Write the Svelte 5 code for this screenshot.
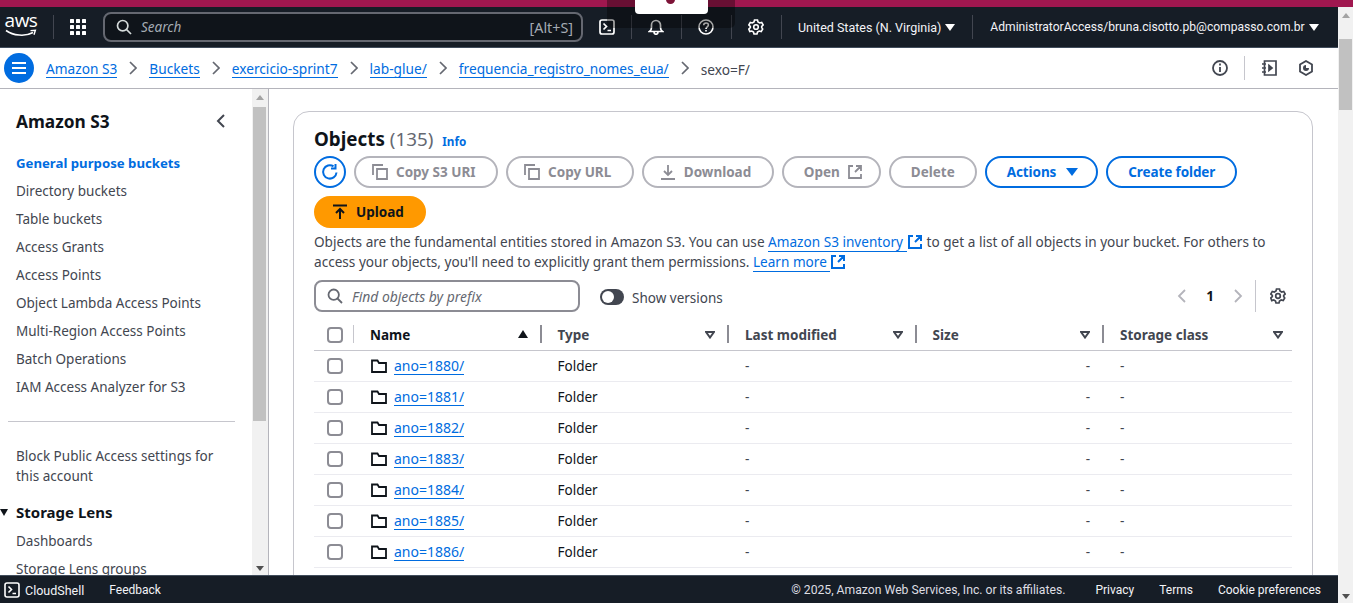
<script lang="ts">
const crumbs = ["Amazon S3", "Buckets", "exercicio-sprint7", "lab-glue/", "frequencia_registro_nomes_eua/"];
const navTop = [
  "Directory buckets",
  "Table buckets",
  "Access Grants",
  "Access Points",
  "Object Lambda Access Points",
  "Multi-Region Access Points",
  "Batch Operations",
  "IAM Access Analyzer for S3",
];
const columns = ["Type", "Last modified", "Size", "Storage class"];
const rows = [1880, 1881, 1882, 1883, 1884, 1885, 1886];
</script>

<div class="strip"></div>
<div class="overlay"><div class="popup"><span class="popup-dot"></span></div></div>

<div class="page">
  <div class="shell">
    <header class="topnav">
      <div class="logo">
        <span class="logo-text">aws</span>
        <svg class="smile" width="32" height="9" viewBox="0 0 32 9">
          <path d="M1 1.500C8 6.500 20 8 28 3.500" fill="none" stroke="#fff" stroke-width="1.600" />
          <path d="M25.500 1.600 30.400 1.200 29 5.800" fill="none" stroke="#fff" stroke-width="1.400" />
        </svg>
      </div>
      <span class="nav-sep sep-logo"></span>
      <svg class="apps" width="16" height="16" viewBox="0 0 16 16" fill="#fff">
        {#each [0, 6, 12] as y}
          {#each [0, 6, 12] as x}
            <rect x={x} y={y} width="4" height="4" rx="0.6" />
          {/each}
        {/each}
      </svg>
      <div class="search">
        <svg width="16" height="16" viewBox="0 0 16 16" fill="none" stroke="#d5dbdb" stroke-width="1.700">
          <circle cx="6.700" cy="6.700" r="5.200" />
          <path d="M10.500 10.500 15 15" />
        </svg>
        <span class="search-text">Search</span>
        <span class="search-key">[Alt+S]</span>
      </div>
      <button class="nav-icon first" aria-label="CloudShell">
        <svg width="16" height="16" viewBox="0 0 16 16" fill="none" stroke="#fff" stroke-width="1.700">
          <rect x="1" y="1" width="14" height="14" rx="2" />
          <path d="M4.500 4.500 7.500 7.500 4.500 10.500M8.500 11.500H12" />
        </svg>
      </button>
      <span class="nav-sep"></span>
      <button class="nav-icon" aria-label="Notifications">
        <svg width="16" height="16" viewBox="0 0 16 16" fill="none" stroke="#fff" stroke-width="1.700">
          <path d="M1.500 12.500c1.500-1 2-2 2-4V6a4.500 4.500 0 0 1 9 0v2.500c0 2 .5 3 2 4ZM6 13c0 3 4 3 4 0" />
        </svg>
      </button>
      <span class="nav-sep"></span>
      <button class="nav-icon" aria-label="Help">
        <svg width="16" height="16" viewBox="0 0 16 16" fill="none" stroke="#fff" stroke-width="1.600">
          <circle cx="8" cy="8" r="7" />
          <path d="M5.700 6.200c0-3 4.700-3 4.700-.1 0 1.900-2.400 1.900-2.400 3.900M8 11v1.500" />
        </svg>
      </button>
      <span class="nav-sep"></span>
      <button class="nav-icon" aria-label="Settings">
        <svg width="16" height="16" viewBox="0 0 16 16" fill="none" stroke="#fff" stroke-width="1.600">
          <circle cx="8" cy="8" r="2.300" />
          <path d="M6.500 1h3l.5 2 1.700 1 2-.6 1.500 2.600-1.500 1.400v1.200L14.700 10l-1.500 2.600-2-.6-1.700 1-.5 2h-3l-.5-2-1.700-1-2 .6L.8 10l1.500-1.400V7.400L.8 6l1.500-2.600 2 .6L6 3Z" />
        </svg>
      </button>
      <span class="nav-sep sep-region"></span>
      <span class="nav-text region">United States (N. Virginia)</span>
      <span class="caret"></span>
      <span class="nav-sep sep-account"></span>
      <span class="nav-text account">AdministratorAccess/bruna.cisotto.pb@compasso.com.br</span>
      <span class="caret"></span>
    </header>

    <div class="crumbbar">
      <button class="menu" aria-label="Open navigation">
        <svg width="16" height="14" viewBox="0 0 16 14" stroke="#fff" stroke-width="2"><path d="M1 2h14M1 7h14M1 12h14" /></svg>
      </button>
      {#each crumbs as crumb}
        <a href="#top" class="crumb">{crumb}</a>
        <svg class="chev" width="8" height="14" viewBox="0 0 8 14" fill="none" stroke="#656871" stroke-width="1.700"><path d="M1 1l6 6-6 6" /></svg>
      {/each}
      <span class="crumb-last">sexo=F/</span>
      <div class="crumb-tools">
        <svg width="16" height="16" viewBox="0 0 16 16" fill="none" stroke="#424650" stroke-width="1.800">
          <circle cx="8" cy="8" r="7" />
          <path d="M8 7v5M8 3.500v2" />
        </svg>
        <span class="tool-sep"></span>
        <svg width="16" height="16" viewBox="0 0 16 16" fill="none" stroke="#424650" stroke-width="1.700">
          <path d="M3.500 1H15v14H3.500ZM1 4h4M1 8h4M1 12h4" />
          <path d="M8 5.500 11 8l-3 2.500Z" fill="#424650" />
        </svg>
        <svg class="tool-hex" width="16" height="16" viewBox="0 0 16 16" fill="none" stroke="#424650" stroke-width="1.800">
          <path d="M8 1l6 3.500v7L8 15l-6-3.500v-7Z" />
          <path d="M8 5a3 3 0 1 0 3 3H8Z" fill="#424650" stroke="none" />
        </svg>
      </div>
    </div>

    <div class="body">
      <aside class="side">
        <div class="side-inner">
          <div class="side-head">
            <h2>Amazon S3</h2>
            <svg width="9" height="14" viewBox="0 0 9 14" fill="none" stroke="#424650" stroke-width="2"><path d="M8 1 2 7l6 6" /></svg>
          </div>
          <a href="#top" class="side-link active">General purpose buckets</a>
          {#each navTop as item}
            <a href="#top" class="side-link">{item}</a>
          {/each}
          <hr />
          <a href="#top" class="side-link multi">Block Public Access settings for this account</a>
          <div class="side-group"><span class="group-caret"></span>Storage Lens</div>
          <a href="#top" class="side-link">Dashboards</a>
          <a href="#top" class="side-link">Storage Lens groups</a>
        </div>
        <div class="side-scroll">
          <span class="arrow-up"></span>
          <span class="side-thumb"></span>
          <span class="spacer"></span>
          <span class="arrow-down"></span>
        </div>
      </aside>

      <main class="content">
        <section class="card">
          <div class="title-row">
            <h1>Objects</h1>
            <span class="count">(135)</span>
            <a href="#top" class="info">Info</a>
          </div>

          <div class="actions">
            <button class="round" aria-label="Refresh">
              <svg width="18" height="18" viewBox="0 0 18 18" fill="none" stroke="#006ce0" stroke-width="2">
                <path d="M15.500 9.500A6.700 6.700 0 1 1 12.500 3.300" />
                <path d="M12.500 1v4.500H8" transform="translate(2 0)" />
              </svg>
            </button>
            <button class="btn off icon-left">
              <svg width="16" height="16" viewBox="0 0 16 16" fill="none" stroke="#8c8c94" stroke-width="1.800"><path d="M11 1H1v10M5 5h10v10H5Z" /></svg>
              Copy S3 URI
            </button>
            <button class="btn off icon-left">
              <svg width="16" height="16" viewBox="0 0 16 16" fill="none" stroke="#8c8c94" stroke-width="1.800"><path d="M11 1H1v10M5 5h10v10H5Z" /></svg>
              Copy URL
            </button>
            <button class="btn off icon-left">
              <svg width="16" height="16" viewBox="0 0 16 16" fill="none" stroke="#8c8c94" stroke-width="1.800"><path d="M8 1v9M4 7l4 4 4-4M1 15h14" /></svg>
              Download
            </button>
            <button class="btn off icon-right">
              Open
              <svg width="14" height="14" viewBox="0 0 14 14" fill="none" stroke="#8c8c94" stroke-width="1.800"><path d="M5 1H1v12h12V9M8 1h5v5M13 1 7 7" /></svg>
            </button>
            <button class="btn off">Delete</button>
            <button class="btn primary icon-caret">
              Actions
              <span class="caret-blue"></span>
            </button>
            <button class="btn primary">Create folder</button>
            <button class="btn upload">
              <svg width="16" height="16" viewBox="0 0 16 16" fill="none" stroke="#0f141a" stroke-width="2"><path d="M1 1.500h14M8 15V5M4 9l4-4 4 4" /></svg>
              Upload
            </button>
          </div>

          <p class="desc">
            Objects are the fundamental entities stored in Amazon S3. You can use
            <a href="#top" class="ext-link"><span>Amazon S3 inventory&nbsp;</span><svg class="ext" width="14" height="14" viewBox="0 0 14 14" fill="none" stroke="#006ce0" stroke-width="2"><path d="M5 1H1v12h12V9M8 1h5v5M13 1 7 7" /></svg></a>
            to get a list of all objects in your bucket. For others to<br />
            access your objects, you'll need to explicitly grant them permissions.
            <a href="#top" class="ext-link"><span>Learn more&nbsp;</span><svg class="ext" width="14" height="14" viewBox="0 0 14 14" fill="none" stroke="#006ce0" stroke-width="2"><path d="M5 1H1v12h12V9M8 1h5v5M13 1 7 7" /></svg></a>
          </p>

          <div class="filter-row">
            <div class="filter">
              <svg width="16" height="16" viewBox="0 0 16 16" fill="none" stroke="#656871" stroke-width="1.800">
                <circle cx="6.700" cy="6.700" r="5.200" />
                <path d="M10.500 10.500 15 15" />
              </svg>
              <span>Find objects by prefix</span>
            </div>
            <span class="toggle"><span class="knob"></span></span>
            <span class="toggle-label">Show versions</span>
            <div class="pager">
              <svg width="10" height="14" viewBox="0 0 10 14" fill="none" stroke="#b4b4bb" stroke-width="1.800"><path d="M8 1 2 7l6 6" /></svg>
              <span class="page-num">1</span>
              <svg width="10" height="14" viewBox="0 0 10 14" fill="none" stroke="#b4b4bb" stroke-width="1.800"><path d="M2 1l6 6-6 6" /></svg>
              <span class="pager-sep"></span>
              <svg width="16" height="16" viewBox="0 0 16 16" fill="none" stroke="#424650" stroke-width="1.700">
                <circle cx="8" cy="8" r="2.300" />
                <path d="M6.500 1h3l.5 2 1.700 1 2-.6 1.500 2.600-1.500 1.400v1.200L14.700 10l-1.500 2.600-2-.6-1.700 1-.5 2h-3l-.5-2-1.700-1-2 .6L.8 10l1.500-1.400V7.400L.8 6l1.500-2.600 2 .6L6 3Z" />
              </svg>
            </div>
          </div>

          <div class="table">
            <div class="row head">
              <div class="cell check"><span class="box"></span><span class="col-sep light"></span></div>
              <div class="cell">
                <span>Name</span>
                <span class="sort-up"></span>
                <span class="col-sep"></span>
              </div>
              {#each columns as col, i}
                <div class="cell" class:dim={i === 3}>
                  <span>{col}</span>
                  <svg class="sort" width="10" height="8" viewBox="0 0 10 8" fill="none" stroke="#424650" stroke-width="2"><path d="M1 1h8L5 6.500Z" /></svg>
                  {#if i < 3}<span class="col-sep"></span>{/if}
                </div>
              {/each}
            </div>
            {#each rows as year}
              <div class="row">
                <div class="cell check"><span class="box"></span></div>
                <div class="cell">
                  <svg class="folder" width="16" height="16" viewBox="0 0 16 16" fill="none" stroke="#0f141a" stroke-width="1.800"><path d="M1 14V2.500h5.500L8 5h7v9Z" /></svg>
                  <a href="#top">ano={year}/</a>
                </div>
                <div class="cell">Folder</div>
                <div class="cell">-</div>
                <div class="cell size">-</div>
                <div class="cell">-</div>
              </div>
            {/each}
          </div>
        </section>
      </main>
    </div>

    <footer class="foot">
      <svg width="16" height="16" viewBox="0 0 16 16" fill="none" stroke="#fff" stroke-width="1.600">
        <rect x="1" y="1" width="14" height="14" rx="2" />
        <path d="M4.500 4.500 7.500 7.500 4.500 10.500M8.500 11.500H12" />
      </svg>
      <span class="foot-shell">CloudShell</span>
      <span class="foot-feedback">Feedback</span>
      <span class="foot-copy">© 2025, Amazon Web Services, Inc. or its affiliates.</span>
      <span class="foot-link">Privacy</span>
      <span class="foot-link">Terms</span>
      <span class="foot-link">Cookie preferences</span>
    </footer>
  </div>

  <div class="page-scroll">
    <span class="arrow-up"></span>
    <span class="page-thumb"></span>
    <span class="spacer"></span>
    <span class="arrow-down"></span>
  </div>
</div>

<style>
  :global(body) {
    margin: 0;
    height: 603px;
    overflow: hidden;
    background: #fff;
    font-family: "Noto Sans", "Open Sans", sans-serif;
    font-size: 14px;
    color: #424650;
  }

  a {
    color: #006ce0;
    text-decoration: none;
    border-bottom: 1px solid #006ce0;
  }

  button {
    font-family: inherit;
    border: 0;
    background: none;
    padding: 0;
  }

  .strip {
    height: 7px;
    background: #a0174f;
  }

  .overlay {
    position: absolute;
    left: 607px;
    top: 0;
    width: 128px;
    height: 28px;
    background: rgba(0, 0, 0, 0.35);
    border-radius: 0 0 5px 5px;
    z-index: 5;
  }

  .popup {
    position: absolute;
    left: 28px;
    top: 0;
    width: 73px;
    height: 14px;
    background: #fff;
    border-radius: 0 0 4px 4px;
  }

  .popup-dot {
    position: absolute;
    left: 31px;
    top: -5px;
    width: 9px;
    height: 9px;
    border-radius: 50%;
    background: #7d1338;
  }

  .page {
    display: flex;
    height: 596px;
  }

  .shell {
    flex: 1;
    min-width: 0;
    display: flex;
    flex-direction: column;
  }

  .topnav {
    height: 40px;
    flex: none;
    background: #161d26;
    border-bottom: 1px solid #414d5c;
    display: flex;
    align-items: center;
    padding-left: 5px;
    color: #fff;
  }

  .logo {
    width: 32px;
    height: 32px;
    display: flex;
    flex-direction: column;
    align-items: center;
    flex: none;
  }

  .logo-text {
    font-size: 19px;
    line-height: 19px;
    font-family: "Open Sans", sans-serif;
    font-weight: 500;
    letter-spacing: -0.5px;
  }

  .smile {
    margin-top: -1px;
  }

  .nav-sep {
    width: 1px;
    height: 24px;
    background: #424650;
    flex: none;
  }

  .sep-logo {
    margin-left: 16px;
    height: 24px;
  }

  .apps {
    margin-left: 16px;
    flex: none;
  }

  .search {
    margin-left: 17px;
    width: 480px;
    height: 30px;
    box-sizing: border-box;
    border: 2px solid #656871;
    border-radius: 8px;
    background: #0f141a;
    display: flex;
    align-items: center;
    padding: 0 8px 0 11px;
    flex: none;
  }

  .search-text {
    margin-left: 9px;
    font-style: italic;
    color: #a4abb3;
    font-size: 13.500px;
  }

  .search-key {
    margin-left: auto;
    color: #a4abb3;
    font-size: 14.300px;
  }

  .nav-icon {
    width: 16px;
    height: 16px;
    margin: 0 16.500px;
    display: block;
    flex: none;
  }

  .nav-icon svg {
    display: block;
  }

  .nav-icon.first {
    margin-left: 16px;
    margin-right: 15.500px;
  }

  .nav-text {
    font-family: Roboto, sans-serif;
    font-size: 12.500px;
    white-space: nowrap;
    color: #f3f3f7;
  }

  .account {
    font-size: 12.100px;
  }

  .sep-region {
    margin-right: 16.500px;
    margin-left: 0;
  }

  .caret {
    margin-left: 4px;
    width: 0;
    height: 0;
    border: 5px solid transparent;
    border-top: 7px solid #fff;
    border-bottom: 0;
    flex: none;
  }

  .sep-account {
    margin: 0 17px 0 17px;
  }

  .crumbbar {
    height: 41px;
    flex: none;
    box-sizing: border-box;
    border-bottom: 1px solid #b4b4bb;
    display: flex;
    align-items: center;
    padding: 0 24px 0 4px;
  }

  .menu {
    width: 30px;
    height: 30px;
    border-radius: 50%;
    background: #006ce0;
    display: flex;
    align-items: center;
    justify-content: center;
    margin-right: 12px;
    flex: none;
  }

  .crumb {
    font-size: 13.700px;
    line-height: 17px;
    white-space: nowrap;
    position: relative;
    top: 1px;
  }

  .chev {
    margin: 0 12px;
    flex: none;
  }

  .crumb-last {
    font-size: 13.700px;
    color: #424650;
    position: relative;
    top: 1px;
  }

  .crumb-tools {
    margin-left: auto;
    display: flex;
    align-items: center;
    gap: 16px;
  }

  .tool-sep {
    width: 1px;
    height: 24px;
    background: #c6c6cd;
  }

  .tool-hex {
    margin-left: 5px;
  }

  .body {
    flex: 1;
    min-height: 0;
    display: flex;
    overflow: hidden;
  }

  .side {
    width: 269px;
    flex: none;
    display: flex;
    box-sizing: border-box;
    border-right: 1px solid #b4b4bb;
  }

  .side-inner {
    width: 252px;
    flex: none;
    overflow: hidden;
    box-sizing: border-box;
    padding: 21px 16px 0;
    display: flex;
    flex-direction: column;
    align-items: flex-start;
  }

  .side-head {
    width: 100%;
    display: flex;
    justify-content: space-between;
    align-items: center;
    padding-right: 11px;
    box-sizing: border-box;
    height: 22px;
    margin-bottom: 21px;
  }

  .side-head h2 {
    margin: 0;
    font-size: 17.300px;
    font-weight: 700;
    color: #0f141a;
  }

  .side-link {
    color: #424650;
    border: 0;
    font-size: 13.500px;
    line-height: 20px;
    margin-bottom: 8px;
    white-space: nowrap;
  }

  .side-link.active {
    color: #006ce0;
    font-weight: 700;
    font-size: 13.200px;
  }

  .side-link.multi {
    white-space: normal;
    margin-bottom: 16px;
  }

  hr {
    width: 227px;
    margin: 16px 0 24px -8px;
    border: 0;
    border-top: 1px solid #c6c6cd;
    flex: none;
  }

  .side-group {
    font-size: 15px;
    font-weight: 700;
    color: #0f141a;
    line-height: 20px;
    margin-bottom: 9px;
    position: relative;
  }

  .group-caret {
    position: absolute;
    left: -16px;
    top: 7px;
    width: 0;
    height: 0;
    border: 4px solid transparent;
    border-top: 7px solid #0f141a;
    border-bottom: 0;
  }

  .side-scroll,
  .page-scroll {
    background: #f1f1f1;
    display: flex;
    flex-direction: column;
    align-items: center;
  }

  .side-scroll {
    width: 16px;
    flex: none;
    box-sizing: border-box;
    padding-right: 1px;
  }

  .page-scroll {
    width: 15px;
    flex: none;
  }

  .arrow-up,
  .arrow-down {
    width: 0;
    height: 0;
    flex: none;
    border: 4px solid transparent;
  }

  .arrow-up {
    border-top: 0;
    border-bottom: 5px solid #a3a3a3;
    margin: 6px 0 7px;
  }

  .arrow-down {
    border-bottom: 0;
    border-top: 5px solid #505050;
    margin: 6px 0 4px;
  }

  .side-thumb {
    width: 13px;
    height: 314px;
    background: #c1c1c1;
    flex: none;
  }

  .page-thumb {
    width: 13px;
    height: 71px;
    background: #c1c1c1;
    flex: none;
    margin-top: 14px;
  }

  .spacer {
    flex: 1;
  }

  .content {
    flex: 1;
    min-width: 0;
    padding: 22px 25px 0 24px;
    overflow: hidden;
  }

  .card {
    box-sizing: border-box;
    border: 1px solid #c6c6cd;
    border-radius: 16px;
    padding: 14px 20px 20px;
    height: 600px;
  }

  .title-row {
    display: flex;
    align-items: baseline;
    height: 27px;
  }

  h1 {
    margin: 0;
    font-size: 18.800px;
    font-weight: 700;
    color: #0f141a;
  }

  .count {
    margin-left: 5px;
    font-size: 18.800px;
    color: #656871;
  }

  .info {
    margin-left: 9px;
    font-size: 11.700px;
    font-weight: 700;
    border: 0;
  }

  .actions {
    margin-top: 3px;
    display: flex;
    flex-wrap: wrap;
    gap: 8px;
  }

  .round {
    width: 32px;
    height: 32px;
    box-sizing: border-box;
    border: 2px solid #006ce0;
    border-radius: 50%;
    display: flex;
    align-items: center;
    justify-content: center;
  }

  .btn {
    height: 32px;
    box-sizing: border-box;
    border-radius: 16px;
    border: 2px solid #b4b4bb;
    padding: 0 20px;
    display: flex;
    align-items: center;
    gap: 8px;
    font-size: 13.500px;
    font-weight: 700;
    white-space: nowrap;
  }

  .off {
    color: #8c8c94;
  }

  .icon-left {
    padding-left: 16px;
    padding-right: 20.500px;
  }

  .icon-right {
    padding-right: 17px;
  }

  .primary {
    border-color: #006ce0;
    color: #006ce0;
    letter-spacing: -0.1px;
  }

  .icon-caret {
    padding-right: 18px;
  }

  .upload {
    background: #ff9900;
    border-color: #ff9900;
    color: #0f141a;
    padding: 0 20px 0 16px;
  }

  .caret-blue {
    width: 0;
    height: 0;
    margin-left: 2px;
    border: 6px solid transparent;
    border-top: 8px solid #006ce0;
    border-bottom: 0;
  }

  .desc {
    margin: 4px 0 0;
    font-size: 13.600px;
    line-height: 20px;
    color: #424650;
    white-space: nowrap;
  }

  .ext-link {
    border: 0;
  }

  .ext-link span {
    border-bottom: 1px solid #006ce0;
  }

  .ext {
    vertical-align: -2px;
    margin: 0 1.500px 0 1px;
  }

  .filter-row {
    display: flex;
    align-items: center;
    margin-top: 8px;
    height: 32px;
  }

  .filter {
    width: 266px;
    height: 32px;
    box-sizing: border-box;
    border: 2px solid #8c8c94;
    border-radius: 8px;
    display: flex;
    align-items: center;
    gap: 9px;
    padding-left: 11px;
    font-style: italic;
    font-size: 13.900px;
    color: #656871;
  }

  .toggle {
    margin-left: 20px;
    width: 24px;
    height: 16px;
    background: #424650;
    border-radius: 8px;
    position: relative;
    top: 1px;
    flex: none;
  }

  .knob {
    position: absolute;
    left: 2px;
    top: 2px;
    width: 12px;
    height: 12px;
    border-radius: 50%;
    background: #fff;
  }

  .toggle-label {
    margin-left: 8px;
    font-size: 13.500px;
    position: relative;
    top: 2px;
  }

  .pager {
    margin-left: auto;
    display: flex;
    align-items: center;
    padding-right: 6px;
  }

  .page-num {
    font-weight: 700;
    color: #0f141a;
    margin: 0 19px 0 19px;
    font-size: 13.500px;
  }

  .pager-sep {
    width: 1px;
    height: 32px;
    background: #c6c6cd;
    margin: 0 14px 0 12px;
  }

  .table {
    margin-top: 8px;
    width: 978px;
  }

  .row {
    display: grid;
    grid-template-columns: 40px repeat(4, 187.500px) 1fr;
    height: 31px;
    box-sizing: border-box;
    border-bottom: 1px solid #ebebf0;
    align-items: center;
    font-size: 13.500px;
  }

  .row.head {
    height: 31px;
    border-bottom: 1px solid #c6c6cd;
    font-weight: 700;
    color: #424650;
  }

  .row.head .cell:nth-child(2) {
    color: #0f141a;
  }

  .cell {
    position: relative;
    padding: 0 16px;
    display: flex;
    align-items: center;
    height: 100%;
    min-width: 0;
    box-sizing: border-box;
    white-space: nowrap;
  }

  .row:not(.head) .cell:nth-child(3) {
    color: #0f141a;
  }

  .check {
    padding: 0 0 0 13px;
  }

  .box {
    width: 16px;
    height: 16px;
    box-sizing: border-box;
    border: 2px solid #8c8c94;
    border-radius: 4px;
    flex: none;
  }

  .col-sep {
    position: absolute;
    right: 0;
    top: 5px;
    width: 2px;
    height: 18px;
    background: #8c8c94;
  }

  .col-sep.light {
    background: #c6c6cd;
    width: 1px;
  }

  .sort-up {
    position: absolute;
    right: 14px;
    top: 10px;
    width: 0;
    height: 0;
    border: 5px solid transparent;
    border-bottom: 8px solid #0f141a;
    border-top: 0;
  }

  .sort {
    position: absolute;
    right: 14px;
    top: 11px;
  }

  .dim .sort {
    right: 9px;
  }

  .folder {
    flex: none;
    margin-left: 1px;
    margin-right: 7px;
  }

  .row a {
    font-size: 14px;
    line-height: 17px;
  }

  .size {
    justify-content: flex-end;
    padding-right: 14px;
  }

  .foot {
    height: 28px;
    flex: none;
    box-sizing: border-box;
    background: #161d26;
    border-top: 1px solid #414d5c;
    display: flex;
    align-items: center;
    padding: 1px 17px 0 4px;
    color: #f3f3f7;
    font-family: Roboto, sans-serif;
    font-size: 12px;
  }

  .foot svg {
    margin-top: -1px;
  }

  .foot-shell {
    margin-left: 5px;
    font-size: 12.500px;
  }

  .foot-feedback {
    margin-left: 25px;
  }

  .foot-copy {
    margin-left: auto;
    color: #dedee3;
    margin-right: 30px;
    font-size: 12.200px;
  }

  .foot-link + .foot-link {
    margin-left: 25px;
  }
</style>
